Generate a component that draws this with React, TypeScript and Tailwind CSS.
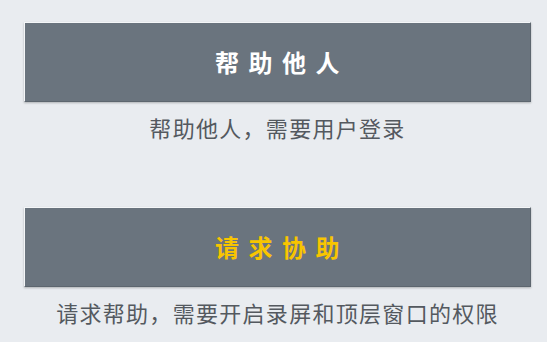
const font = { fontFamily: '"Noto Sans CJK SC", "Noto Sans", sans-serif' }

function Section({ title, desc, accent }: { title: string; desc: string; accent?: boolean }) {
  return (
    <div className="flex flex-col">
      <div className="h-[80px] flex items-center justify-center bg-[#6a747e] border border-[#5d666f] border-t-[#f4f6f8] border-l-[#f4f6f8] shadow-[0_1px_2px_rgba(0,0,0,0.25)]">
        <span
          className={`text-[24px] font-semibold tracking-[9.5px] pl-[9px] leading-none ${accent ? "text-[#f8c500]" : "text-white"}`}
        >
          {title}
        </span>
      </div>
      <div className="mt-[10px] text-center text-[22px] leading-[30px] tracking-[1.3px] text-[#54595f]">{desc}</div>
    </div>
  )
}

export default function App() {
  return (
    <div className="w-[547px] h-[342px] overflow-hidden bg-[#e9ecf0] pl-[24px] pr-[16px] pt-[22px]" style={font}>
      <div className="flex flex-col gap-[65px]">
        <Section title="帮助他人" desc="帮助他人，需要用户登录" />
        <Section title="请求协助" desc="请求帮助，需要开启录屏和顶层窗口的权限" accent />
      </div>
    </div>
  )
}
